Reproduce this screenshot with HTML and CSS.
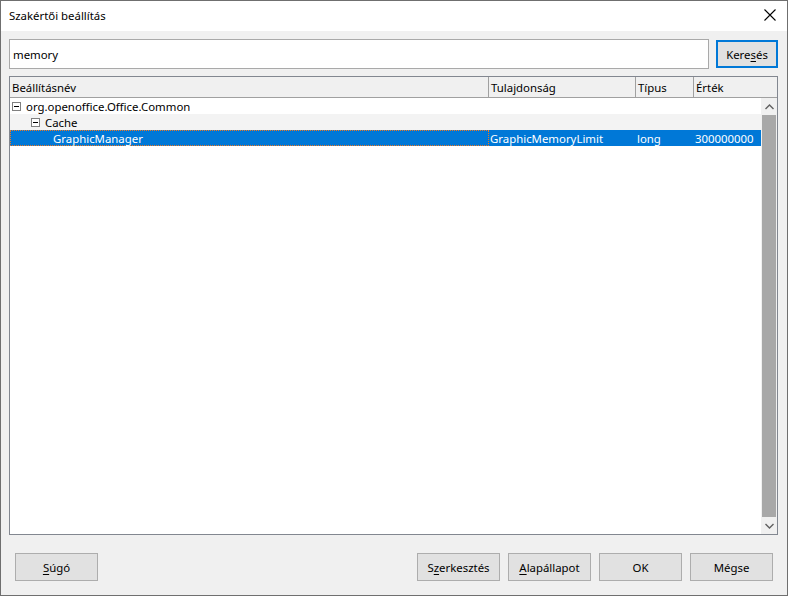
FILE: index.html
```html
<!DOCTYPE html>
<html lang="hu">
<head>
<meta charset="utf-8">
<link rel="stylesheet" href="styles.css">
</head>
<body>
<div class="window">
  <div class="titlebar">
    <span class="title">Szakértői beállítás</span>
    <span class="close"><svg width="12" height="12" viewBox="0 0 12 12"><path d="M0.5 0.5 L11.5 11.5 M11.5 0.5 L0.5 11.5" stroke="#000" stroke-width="1.1" fill="none"/></svg></span>
  </div>
  <div class="body">
    <div class="searchrow">
      <div class="search">memory</div>
      <button class="btn btn-search">Kere<u>s</u>és</button>
    </div>
    <div class="table">
      <div class="thead">
        <div class="th c1">Beállításnév</div>
        <div class="th c2">Tulajdonság</div>
        <div class="th c3">Típus</div>
        <div class="th c4">Érték</div>
      </div>
      <div class="tbody">
        <div class="rows">
          <div class="row">
            <div class="cell c1"><span class="exp"></span>org.openoffice.Office.Common</div>
          </div>
          <div class="row alt">
            <div class="cell c1 lvl2"><span class="exp"></span>Cache</div>
          </div>
          <div class="row sel">
            <div class="cell c1 lvl3 focus">GraphicManager</div>
            <div class="cell c2">GraphicMemoryLimit</div>
            <div class="cell c3">long</div>
            <div class="cell c4">300000000</div>
          </div>
        </div>
        <div class="scrollbar">
          <div class="arrow"><svg width="9" height="6" viewBox="0 0 9 6"><path d="M0.5 5 L4.5 1 L8.5 5" stroke="#606060" stroke-width="1.4" fill="none"/></svg></div>
          <div class="thumb"></div>
          <div class="arrow"><svg width="9" height="6" viewBox="0 0 9 6"><path d="M0.5 1 L4.5 5 L8.5 1" stroke="#606060" stroke-width="1.4" fill="none"/></svg></div>
        </div>
      </div>
    </div>
    <div class="footer">
      <button class="btn"><u>S</u>úgó</button>
      <div class="spacer"></div>
      <button class="btn">S<u>z</u>erkesztés</button>
      <button class="btn"><u>A</u>lapállapot</button>
      <button class="btn">OK</button>
      <button class="btn">Mégse</button>
    </div>
  </div>
</div>
</body>
</html>
```
FILE: styles.css
```css
* { box-sizing: border-box; }
html, body { margin: 0; padding: 0; }
body {
  width: 788px;
  height: 596px;
  font-family: "Noto Sans", "Open Sans", sans-serif;
  font-size: 11.4px;
  color: #000;
  background: #f0f0f0;
}
.window {
  width: 788px;
  height: 596px;
  border: 1px solid #6f6f6f;
  display: flex;
  flex-direction: column;
  background: #f0f0f0;
}
.titlebar {
  height: 30px;
  background: #fff;
  display: flex;
  align-items: center;
  justify-content: space-between;
  padding: 0 10px 0 8px;
  flex-shrink: 0;
}
.title { margin-top: -2px; }
.close { display: flex; align-items: center; margin-right: 1px; margin-top: -2px; }
.body {
  flex: 1;
  display: flex;
  flex-direction: column;
  padding: 8px 9px 0 8px;
}
.searchrow {
  display: flex;
  gap: 7px;
  height: 30px;
  align-items: center;
}
.search {
  flex: 1;
  height: 30px;
  background: #fff;
  border: 1px solid #a9a9a9;
  padding: 0 3px;
  display: flex;
  align-items: center;
}
.btn {
  font-family: inherit;
  font-size: 11.4px;
  color: #000;
  background: #e1e1e1;
  border: 1px solid #adadad;
  height: 28px;
  width: 83px;
  padding: 0;
  margin: 0;
}
.btn u { text-decoration-thickness: 1px; text-underline-offset: 2px; }
.btn-search {
  width: 62px;
  height: 28px;
  border: 2px solid #0078d7;
}
.table {
  margin-top: 7px;
  height: 459px;
  border: 1px solid #828790;
  background: #fff;
  display: flex;
  flex-direction: column;
}
.thead {
  display: flex;
  height: 21px;
  background: #f0f0f0;
  border-bottom: 1px solid #a0a0a0;
  flex-shrink: 0;
}
.th {
  padding-left: 2px;
  display: flex;
  align-items: center;
  border-right: 1px solid #a0a0a0;
}
.th.c4 { border-right: none; }
.c1 { width: 479px; }
.c2 { width: 147px; }
.c3 { width: 58px; }
.c4 { flex: 1; }
.tbody {
  flex: 1;
  display: flex;
}
.rows { flex: 1; }
.row {
  height: 16px;
  display: flex;
  align-items: center;
}
.row.alt { background: #f3f3f3; }
.row.sel { background: #0078d7; color: #fff; }
.cell {
  height: 16px;
  display: flex;
  align-items: center;
  padding-left: 1px;
  white-space: nowrap;
}
.row .c1 { width: 479px; }
.row .cell.c1 { padding-left: 2px; }
.row .cell.lvl2 { padding-left: 21px; }
.row .cell.lvl3 { padding-left: 42px; }
.cell.focus { border: 1px dotted #f07820; }
.exp {
  display: inline-block;
  width: 9px;
  height: 9px;
  border: 1px solid #808080;
  margin-right: 5px;
  position: relative;
  background: #fff;
}
.exp::after {
  content: "";
  position: absolute;
  left: 1px;
  top: 3px;
  width: 5px;
  height: 1px;
  background: #000;
}
.scrollbar {
  width: 16px;
  display: flex;
  flex-direction: column;
  background: #f0f0f0;
}
.arrow {
  height: 17px;
  display: flex;
  align-items: center;
  justify-content: center;
}
.thumb {
  flex: 1;
  background: #a8a8a8;
  margin: 0 1px;
}
.footer {
  display: flex;
  gap: 8px;
  margin-top: 18px;
  padding: 0 5px 0 6px;
}
.footer .btn { width: 83px; height: 28px; }
.spacer { flex: 1; }
```
